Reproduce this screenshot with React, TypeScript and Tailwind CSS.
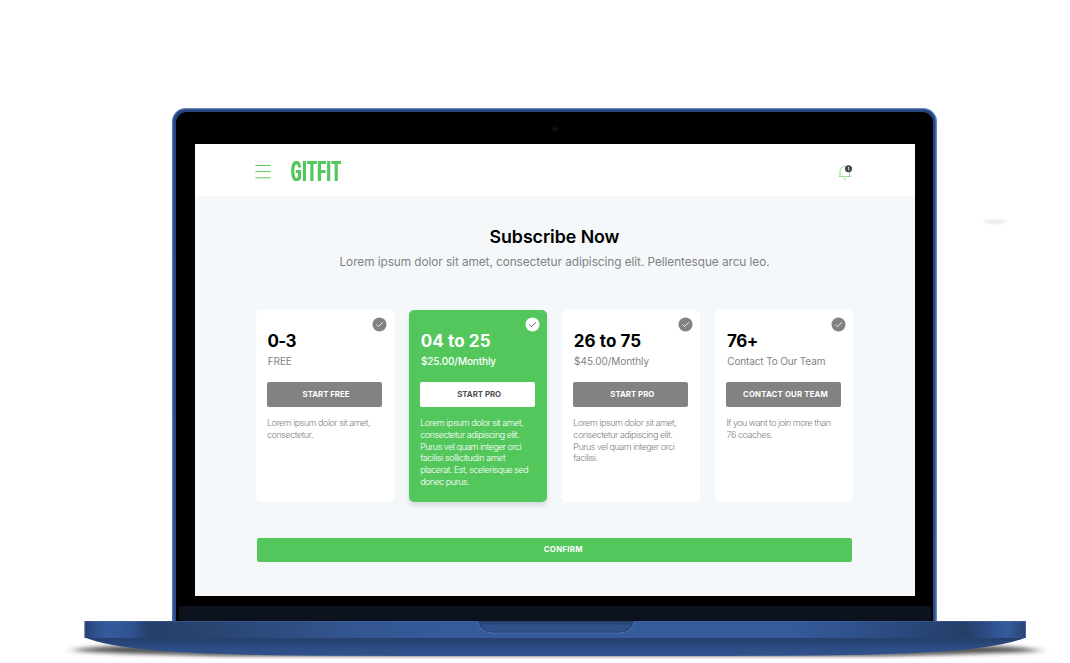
import React from "react";

type Plan = {
  title: string;
  price: string;
  action: string;
  lines: string[];
  titleWidth: number;
  priceWidth: number;
  actionWidth: number;
  lineWidths: number[];
  featured?: boolean;
};

const plans: Plan[] = [
  { title: "0-3", price: "FREE", action: "START FREE", titleWidth: 28.5, priceWidth: 24, actionWidth: 47, lines: ["Lorem ipsum dolor sit amet,", "consectetur."], lineWidths: [103, 46] },
  { title: "04 to 25", price: "$25.00/Monthly", action: "START PRO", titleWidth: 70, priceWidth: 75, actionWidth: 44, lines: ["Lorem ipsum dolor sit amet,", "consectetur adipiscing elit.", "Purus vel quam integer orci", "facilisi sollicitudin amet", "placerat. Est, scelerisque sed", "donec purus."], lineWidths: [103, 99, 101, 85, 108, 49], featured: true },
  { title: "26 to 75", price: "$45.00/Monthly", action: "START PRO", titleWidth: 67.5, priceWidth: 75, actionWidth: 44, lines: ["Lorem ipsum dolor sit amet,", "consectetur adipiscing elit.", "Purus vel quam integer orci", "facilisi."], lineWidths: [103, 99, 101, 24] },
  { title: "76+", price: "Contact To Our Team", action: "CONTACT OUR TEAM", titleWidth: 31, priceWidth: 98, actionWidth: 85, lines: ["If you want to join more than", "76 coaches."], lineWidths: [104, 46] },
];

/* Sets the letter spacing so that a single line of text fills the given width. */
function Fit({ width, children, className = "" }: { width: number; children: string; className?: string }) {
  const ref = React.useRef<HTMLSpanElement>(null);
  const [spacing, setSpacing] = React.useState(0);
  React.useLayoutEffect(() => {
    if (ref.current) {
      const natural = ref.current.getBoundingClientRect().width;
      setSpacing((width - natural) / children.length);
    }
  }, [width, children]);
  return (
    <span ref={ref} className={`inline-block whitespace-nowrap ${className}`} style={{ letterSpacing: spacing }}>
      {children}
    </span>
  );
}

function Check({ featured }: { featured?: boolean }) {
  return (
    <svg className="absolute top-[7px] right-[6.5px] size-[15px]" viewBox="0 0 15 15" fill="none">
      <circle cx="7.5" cy="7.5" r="7" fill={featured ? "#fff" : "#828282"} />
      <path d="M4.3 7.5 6.5 9.5 10.9 5.3" stroke={featured ? "#555" : "#f2f2f2"} strokeWidth="0.9" />
    </svg>
  );
}

function Card({ plan }: { plan: Plan }) {
  const f = plan.featured;
  return (
    <div className={`relative h-[192px] w-[138px] rounded-[5px] pl-[11.5px] ${f ? "bg-[#53c75c] shadow-[0_4px_5px_rgba(0,0,0,0.11)]" : "bg-white"}`}>
      <Check featured={f} />
      <h2 className={`mt-[20px] h-[22px] pl-[0.5px] text-[17px] leading-[23px] font-bold ${f ? "text-white" : "text-black"}`}>
        <Fit width={plan.titleWidth}>{plan.title}</Fit>
      </h2>
      <p className={`mt-[2px] h-[14px] pl-[0.8px] text-[10px] leading-[15px] ${f ? "font-medium text-white" : "text-[#828282]"}`}>
        <Fit width={plan.priceWidth}>{plan.price}</Fit>
      </p>
      <button className={`mt-[14px] flex h-[25px] w-[115px] items-center justify-center rounded-[2px] pl-[3px] text-[7.8px] leading-[25px] font-bold ${f ? "bg-white text-[#4f4f4f]" : "bg-[#828282] text-white"}`}>
        <Fit width={plan.actionWidth}>{plan.action}</Fit>
      </button>
      <div className={`mt-[10px] flex flex-col items-start text-[9px] font-light ${f ? "text-white" : "text-[#828282]"}`}>
        {plan.lines.map((line, i) => (
          <span key={line} className="h-[11.8px] leading-[12px]">
            <Fit width={plan.lineWidths[i]}>{line}</Fit>
          </span>
        ))}
      </div>
    </div>
  );
}

function Base() {
  return (
    <svg className="-ml-[30px] h-[42px] w-[1000px] shrink-0" viewBox="55 621 1000 42">
      <defs>
        <linearGradient id="edge">
          <stop offset="0" stopColor="#263d68" />
          <stop offset=".008" stopColor="#2d4c84" />
          <stop offset=".025" stopColor="#365b9d" />
          <stop offset=".05" stopColor="#2f5290" />
          <stop offset=".07" stopColor="#263f69" />
          <stop offset=".13" stopColor="#29446f" />
          <stop offset=".3" stopColor="#345793" />
          <stop offset=".4" stopColor="#365b9b" />
          <stop offset=".75" stopColor="#365b9b" />
          <stop offset=".86" stopColor="#2b4a80" />
          <stop offset=".935" stopColor="#253e68" />
          <stop offset=".955" stopColor="#2c4b83" />
          <stop offset=".98" stopColor="#365b9d" />
          <stop offset="1" stopColor="#294573" />
        </linearGradient>
        <linearGradient id="under" x1="0" y1="0" x2="0" y2="1">
          <stop offset="0" stopColor="#263f6c" />
          <stop offset=".6" stopColor="#2d4d85" />
          <stop offset="1" stopColor="#30528e" />
        </linearGradient>
        <linearGradient id="notch" x1="0" y1="0" x2="0" y2="1">
          <stop offset="0" stopColor="#263f6c" />
          <stop offset=".35" stopColor="#2e4e87" />
          <stop offset="1" stopColor="#31548f" />
        </linearGradient>
        <filter id="soft" x="-20%" y="-100%" width="140%" height="300%"><feGaussianBlur stdDeviation="5 2" /></filter>
        <filter id="faint" x="-20%" y="-100%" width="140%" height="300%"><feGaussianBlur stdDeviation="8 1" /></filter>
      </defs>
      <path d="M70 650.5Q94 646 130 646H980Q1018 646 1043 650.5Q1005 654 900 655H210Q110 654 70 650.5Z" fill="#333" fillOpacity=".85" filter="url(#soft)" />
      <path d="M150 653.5H960L880 657H230Z" fill="#555" fillOpacity=".4" filter="url(#faint)" />
      <path d="M84.5 637.5H1026C995 649 940 653 850 655Q800 656 555 656Q310 656 260 655C170 653 115 649 84.5 637.5Z" fill="url(#under)" />
      <path d="M84.5 621H1026V638H84.5Z" fill="url(#edge)" />
      <path d="M84.5 621.4H1026" stroke="#456bb0" strokeOpacity=".6" strokeWidth=".8" />
      <path d="M85 621V638M1025.5 621V638" stroke="#5b7dbb" strokeOpacity=".6" />
      <path d="M478 621H634Q633 633 619 633H493Q479 633 478 621Z" fill="url(#notch)" />
      <path d="M478.2 622Q480 633 493 633H619Q632 633 633.8 622" fill="none" stroke="#4a73bd" />
      <path d="M479.2 622Q481 632 493 632H619Q631 632 632.8 622" fill="none" stroke="#263f6c" strokeWidth=".8" />
    </svg>
  );
}

export default function App() {
  return (
    <div className="relative flex h-[663px] w-[1070px] flex-col overflow-hidden bg-white pt-[108px] font-['Inter','Liberation_Sans',sans-serif]">
      <svg className="absolute top-[214px] left-[975px] h-[14px] w-[40px]" viewBox="0 0 40 14">
        <defs><filter id="smudge" x="-30%" y="-100%" width="160%" height="300%"><feGaussianBlur stdDeviation="1.5 .8" /></filter></defs>
        <ellipse cx="20" cy="7.6" rx="12" ry="2.3" fill="#ededed" filter="url(#smudge)" />
      </svg>
      <div className="ml-[172px] h-[513px] w-[765px] shrink-0 rounded-t-[14px] bg-[#2c4b85] bg-linear-to-b from-[#3d61a2] via-[#25437b] via-[3px] to-[#2c4b85] p-1 pb-0 shadow-[inset_1.5px_0_0_#4a70b5,inset_-1.5px_0_0_#6286c4,inset_0_1px_0_#6c8abd]">
        <div className="flex h-full flex-col items-center rounded-t-[11px] bg-black">
          <div className="flex h-[32px] w-full items-center justify-center pt-[2px]">
            <svg className="size-[8px]" viewBox="0 0 8 8"><circle cx="4" cy="4" r="3" fill="#080b12" /><circle cx="4" cy="4" r="1.3" fill="#0c1325" /></svg>
          </div>
          <main className="ml-px flex h-[451.5px] w-[720px] shrink-0 flex-col bg-[#f4f8fb]">
            <header className="flex h-[52px] items-center bg-white px-[60px]">
              <svg className="mt-[3px] h-[16px] w-[16px]" viewBox="0 0 16 16" stroke="#53c75c" strokeLinecap="round">
                <path d="M.8 1.5H15.2M.8 7.6H15.2M.8 13.8H15.2" />
              </svg>
              <div className="mt-[2px] ml-[20px] w-[52px] text-[28.5px] leading-[30px] text-[#53c75c]">
                <span className="inline-block origin-left scale-x-[0.535] font-['Roboto',sans-serif] font-semibold tracking-[1.5px] [text-shadow:1px_0_currentColor,-1px_0_currentColor]">GITFIT</span>
              </div>
              <svg className="mt-[4px] ml-auto mr-[2px] h-[16px] w-[16px]" viewBox="0 0 16 16" fill="none">
                <path d="M3 12.5V7.5C3.2 3.8 5.2 2.2 8.5 2.2M12.5 7.5V12.5M1.8 12.5H14.2M6.7 15.1H9" stroke="#7cda85" strokeWidth=".85" />
                <circle cx="11.5" cy="4.8" r="3.5" fill="#444" />
                <path d="M11 3.6 11.7 3.2V6.5" stroke="#fff" strokeWidth=".8" />
              </svg>
            </header>
            <section className="flex flex-col items-center pt-[28px]">
              <h1 className="mr-px h-[26px] text-[17.8px] leading-[26px] font-semibold text-black"><Fit width={130}>Subscribe Now</Fit></h1>
              <p className="mr-px h-[24px] text-[11.8px] leading-[24px] text-[#828282]"><Fit width={430}>Lorem ipsum dolor sit amet, consectetur adipiscing elit. Pellentesque arcu leo.</Fit></p>
            </section>
            <section className="mt-[36px] ml-[60.5px] flex w-[597.5px] justify-between">
              {plans.map((plan) => <Card key={plan.title} plan={plan} />)}
            </section>
            <button className="mt-[35.5px] ml-[61.5px] flex h-[24.5px] w-[595.5px] shrink-0 items-center justify-center rounded-[2px] bg-[#53c75c] pt-px pl-[18px] text-[7.8px] font-bold text-white">
              <Fit width={39}>CONFIRM</Fit>
            </button>
          </main>
          <div className="mt-auto h-[15.5px] w-[752px] rounded-b-[4px] bg-[#0c131e]" />
        </div>
      </div>
      <div className="flex pl-[85px]"><Base /></div>
    </div>
  );
}
